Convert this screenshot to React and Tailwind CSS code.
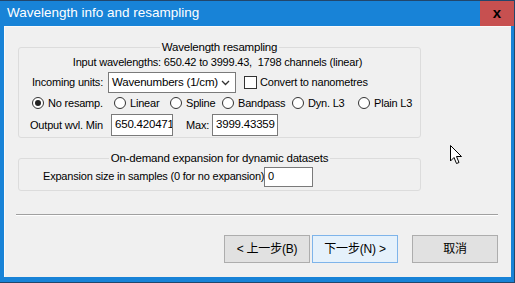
const RADIOS = [
  { label: 'No resamp.', checked: true, w: 'w-[82px]' },
  { label: 'Linear', w: 'w-[56px]' },
  { label: 'Spline', w: 'w-[52px]' },
  { label: 'Bandpass', w: 'w-[70px]' },
  { label: 'Dyn. L3', w: 'w-[66px]' },
  { label: 'Plain L3', w: 'w-[60px]' },
];

function Radio({ label, checked, w }) {
  return (
    <div className={`flex items-center gap-[4px] shrink-0 ${w}`}>
      <span className="w-[12px] h-[12px] shrink-0 rounded-full border border-[#333] bg-white flex items-center justify-center">
        {checked && <span className="w-[6px] h-[6px] rounded-full bg-[#222]" />}
      </span>
      <span>{label}</span>
    </div>
  );
}

function Cursor() {
  return (
    <svg className="absolute left-[445px] top-[118px]" width="13" height="20" viewBox="0 0 13 20">
      <path d="M0.5 0.5 L0.5 16 L4 12.5 L6.5 18.5 L9 17.5 L6.5 11.5 L11.5 11.5 Z" fill="#fff" stroke="#000" strokeWidth="1" />
    </svg>
  );
}

export default function App() {
  return (
    <div className="w-[515px] h-[283px] bg-[#1883d7] flex flex-col border-t border-r border-b border-[#22466b] overflow-hidden whitespace-nowrap font-['Liberation_Sans','Noto_Sans_CJK_SC',sans-serif] text-[11px] text-black">
      {/* Title bar */}
      <div className="h-[25px] flex items-stretch justify-between shrink-0">
        <div className="pl-[7px] flex items-center text-white text-[13.5px]">Wavelength info and resampling</div>
        <div className="w-[34px] bg-[#c75050] flex items-center justify-center font-bold text-[15px] leading-none pb-[2px]">x</div>
      </div>

      {/* Body */}
      <div className="relative flex-1 ml-[4px] mr-[3px] mb-[5px] bg-[#f0f0f0] border-t border-l border-[#fafafa] flex flex-col tracking-[-0.2px]">
        <fieldset className="ml-[13px] mt-[13px] w-[403px] border border-[#dcdcdc] rounded-[3px] pb-[1px]">
          <legend className="mx-auto px-[2px] leading-[14px] text-[11.5px]">Wavelength resampling</legend>
          <div className="h-[16px] flex items-center justify-center pr-[4px]">
            Input wavelengths: 650.42 to 3999.43,&nbsp; 1798 channels (linear)
          </div>
          <div className="mt-[2px] h-[21px] flex items-center pl-[13px]">
            <span className="w-[76px] shrink-0">Incoming units:</span>
            <div className="w-[128px] h-[21px] shrink-0 bg-white border border-[#7a7a7a] flex items-center justify-between pl-[3px] pr-[5px] text-[11.5px]">
              <span>Wavenumbers (1/cm)</span>
              <svg width="9" height="6" viewBox="0 0 9 6">
                <path d="M1 1 L4.5 4.5 L8 1" fill="none" stroke="#333" strokeWidth="1.3" />
              </svg>
            </div>
            <span className="ml-[8px] w-[13px] h-[13px] shrink-0 bg-white border border-[#333]" />
            <span className="ml-[3px]">Convert to nanometres</span>
          </div>
          <div className="h-[20px] flex items-center pl-[13px]">
            {RADIOS.map((r) => (
              <Radio key={r.label} {...r} />
            ))}
          </div>
          <div className="mt-[1px] h-[22px] flex items-center pl-[11px]">
            <span className="w-[81px] shrink-0">Output wvl. Min</span>
            <div className="w-[62px] h-[22px] shrink-0 bg-white border border-[#7a7a7a] flex items-center pl-[3px] overflow-hidden text-[11.5px]">650.420471</div>
            <span className="ml-[13px] w-[26px] shrink-0">Max:</span>
            <div className="w-[66px] h-[22px] shrink-0 bg-white border border-[#7a7a7a] flex items-center pl-[3px] overflow-hidden text-[11.5px]">3999.43359</div>
          </div>
        </fieldset>

        <fieldset className="ml-[13px] mt-[13px] w-[403px] border border-[#dcdcdc] rounded-[3px] pb-[3px]">
          <legend className="mx-auto px-[2px] leading-[14px] text-[11.5px]">On-demand expansion for dynamic datasets</legend>
          <div className="mt-[1px] h-[21px] flex items-center pl-[24px]">
            <span className="w-[221px] shrink-0">Expansion size in samples (0 for no expansion)</span>
            <div className="w-[49px] h-[20px] shrink-0 bg-white border border-[#7a7a7a] flex items-center pl-[3px]">0</div>
          </div>
        </fieldset>

        <div className="ml-[11px] mt-[23px] w-[482px] h-[2px] border-t border-[#a0a0a0] border-b border-b-white" />

        <div className="mt-[19px] flex pl-[219px]">
          <button className="w-[86px] h-[28px] bg-[#e1e1e1] border border-[#adadad] text-[12px] flex items-center justify-center">
            &lt; 上一步(B)
          </button>
          <button className="ml-[2px] w-[86px] h-[28px] bg-[#e5f1fb] border border-[#7eb4ea] text-[12px] flex items-center justify-center">
            下一步(N) &gt;
          </button>
          <button className="ml-[14px] w-[86px] h-[28px] bg-[#e1e1e1] border border-[#adadad] text-[12px] flex items-center justify-center">
            取消
          </button>
        </div>

        <Cursor />
      </div>
    </div>
  );
}
